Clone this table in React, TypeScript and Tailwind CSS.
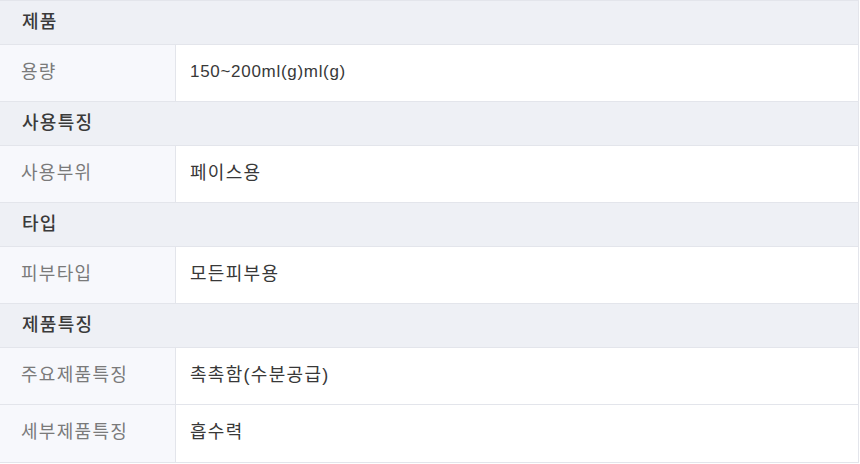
import React from "react";

type Row = { kind: "h"; title: string } | { kind: "r"; label: string; value: string; latin?: boolean };

const rows: Row[] = [
  { kind: "h", title: "제품" },
  { kind: "r", label: "용량", value: "150~200ml(g)ml(g)", latin: true },
  { kind: "h", title: "사용특징" },
  { kind: "r", label: "사용부위", value: "페이스용" },
  { kind: "h", title: "타입" },
  { kind: "r", label: "피부타입", value: "모든피부용" },
  { kind: "h", title: "제품특징" },
  { kind: "r", label: "주요제품특징", value: "촉촉함(수분공급)" },
  { kind: "r", label: "세부제품특징", value: "흡수력" },
];

export default function App() {
  return (
    <div
      className="w-[860px] h-[464px] bg-white overflow-hidden"
      style={{ fontFamily: '"Liberation Sans", "Noto Sans CJK KR", sans-serif' }}
    >
      <div className="w-[859px] border-t border-r border-b border-[#e3e5eb] text-[18px] tracking-[1.3px]">
        {rows.map((r, i) =>
          r.kind === "h" ? (
            <div
              key={i}
              className="h-[44px] flex items-center pl-[22px] pb-[1px] bg-[#eef0f5] border-b border-[#e3e5eb] font-medium text-[#3a3a3a]"
            >
              {r.title}
            </div>
          ) : (
            <div key={i} className="h-[57px] flex border-b border-[#e3e5eb] last:border-b-0">
              <div className="w-[176px] shrink-0 flex items-center pl-[21px] pb-[2px] bg-[#f7f8fc] border-r border-[#e3e5eb] text-[#7a7a7a]">
                {r.label}
              </div>
              <div
                className={
                  r.latin
                    ? "flex-1 flex items-center pl-[14px] pb-[2px] bg-white text-[#383838] text-[17px] tracking-[0.7px]"
                    : "flex-1 flex items-center pl-[14px] pb-[2px] bg-white text-[#383838]"
                }
              >
                {r.value}
              </div>
            </div>
          )
        )}
      </div>
    </div>
  );
}
